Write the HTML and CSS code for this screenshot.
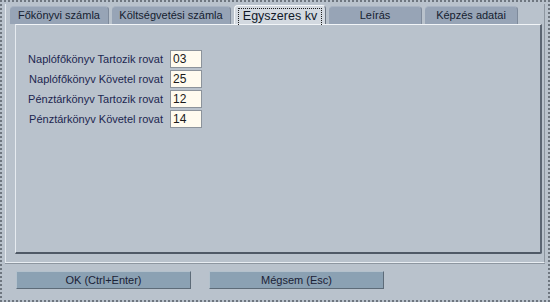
FILE: index.html
```html
<!DOCTYPE html>
<html lang="hu">
<head>
  <meta charset="UTF-8">
  <title>Egyszeres kv</title>
  <link rel="stylesheet" href="styles.css">
</head>
<body>
  <div class="window">
    <div class="frame">
      <div class="tabs">
        <div class="tab t1">Főkönyvi számla</div>
        <div class="tab t2">Költségvetési számla</div>
        <div class="tab t3 active"><span>Egyszeres kv</span></div>
        <div class="tab t4">Leírás</div>
        <div class="tab t5">Képzés adatai</div>
      </div>
      <div class="panel">
        <div class="fields">
          <label>Naplófőkönyv Tartozik rovat</label>
          <input type="text" value="03">
          <label>Naplófőkönyv Követel rovat</label>
          <input type="text" value="25">
          <label>Pénztárkönyv Tartozik rovat</label>
          <input type="text" value="12">
          <label>Pénztárkönyv Követel rovat</label>
          <input type="text" value="14">
        </div>
      </div>
    </div>
    <div class="buttons">
      <button class="btn ok">OK (Ctrl+Enter)</button>
      <button class="btn">Mégsem (Esc)</button>
    </div>
  </div>
</body>
</html>
```

FILE: styles.css
```css
html, body {
  margin: 0;
  padding: 0;
}
body {
  width: 550px;
  height: 302px;
  background: #b9c2cc;
  font-family: "Liberation Sans", Arial, sans-serif;
  font-size: 11px;
  color: #1d2744;
  overflow: hidden;
}
.window {
  box-sizing: border-box;
  width: 550px;
  height: 302px;
  border: 2px dotted #6e767f;
  padding: 2px 3px 0 3px;
}
.frame {
  box-sizing: border-box;
  height: 259px;
  border-left: 1px solid #e4e9ee;
  border-right: 1px solid #8d96a0;
  border-bottom: 1px solid #e8edf2;
  box-shadow: 0 1px 0 #8d96a0;
  padding: 1px 0 0 4px;
}
.tabs {
  display: flex;
  height: 19px;
  align-items: flex-end;
}
.tab {
  box-sizing: border-box;
  height: 18px;
  background: #97a4b6;
  border-radius: 4px 4px 0 0;
  border-top: 1px solid #a9b4c3;
  border-right: 1px solid #7e8a9b;
  text-align: center;
  line-height: 17px;
  margin-right: 3px;
  color: #151d30;
}
.t1 { width: 99px; }
.t2 { width: 119px; }
.t3 { width: 92px; }
.t4 { width: 93px; }
.t5 { width: 93px; }
.tab.active {
  height: 19px;
  background: #d3d9e0;
  border-top: 1px solid #f4f6f8;
  border-left: 1px solid #f4f6f8;
  border-right: 1px solid #6c7582;
  padding: 2px 3px 0 3px;
  line-height: 14px;
  font-size: 12.5px;
  color: #101828;
}
.tab.active span {
  display: block;
  border: 1px dotted #202020;
  border-bottom: none;
  height: 16px;
}
.panel {
  box-sizing: border-box;
  width: 527px;
  height: 230px;
  margin-left: 5px;
  background: #b9c2cc;
  border-top: 1px solid #f2f5f8;
  border-left: 1px solid #e6ebf0;
  border-right: 2px solid #5b6572;
  border-bottom: 2px solid #4f5966;
  border-radius: 0 0 2px 0;
  padding: 25px 0 0 0;
}
.fields {
  display: grid;
  grid-template-columns: 147px 32px;
  column-gap: 7px;
  row-gap: 2px;
  align-items: center;
}
.fields label {
  text-align: right;
  white-space: nowrap;
  color: #1c2650;
}
.fields input {
  box-sizing: border-box;
  width: 32px;
  height: 18px;
  margin: 0;
  padding: 0 2px;
  border: 1px solid #8c939b;
  background: #fffbef;
  font-family: "Liberation Sans", Arial, sans-serif;
  font-size: 12px;
  color: #1a1a1a;
}
.buttons {
  display: flex;
  gap: 18px;
  padding: 8px 0 0 11px;
}
.btn {
  box-sizing: border-box;
  width: 175px;
  height: 18px;
  background: #8ba1b3;
  border: 1px solid #5d6b78;
  border-top-color: #b3c1cc;
  border-left-color: #b3c1cc;
  font-family: "Liberation Sans", Arial, sans-serif;
  font-size: 11px;
  color: #1a2236;
  padding: 0;
}
```
